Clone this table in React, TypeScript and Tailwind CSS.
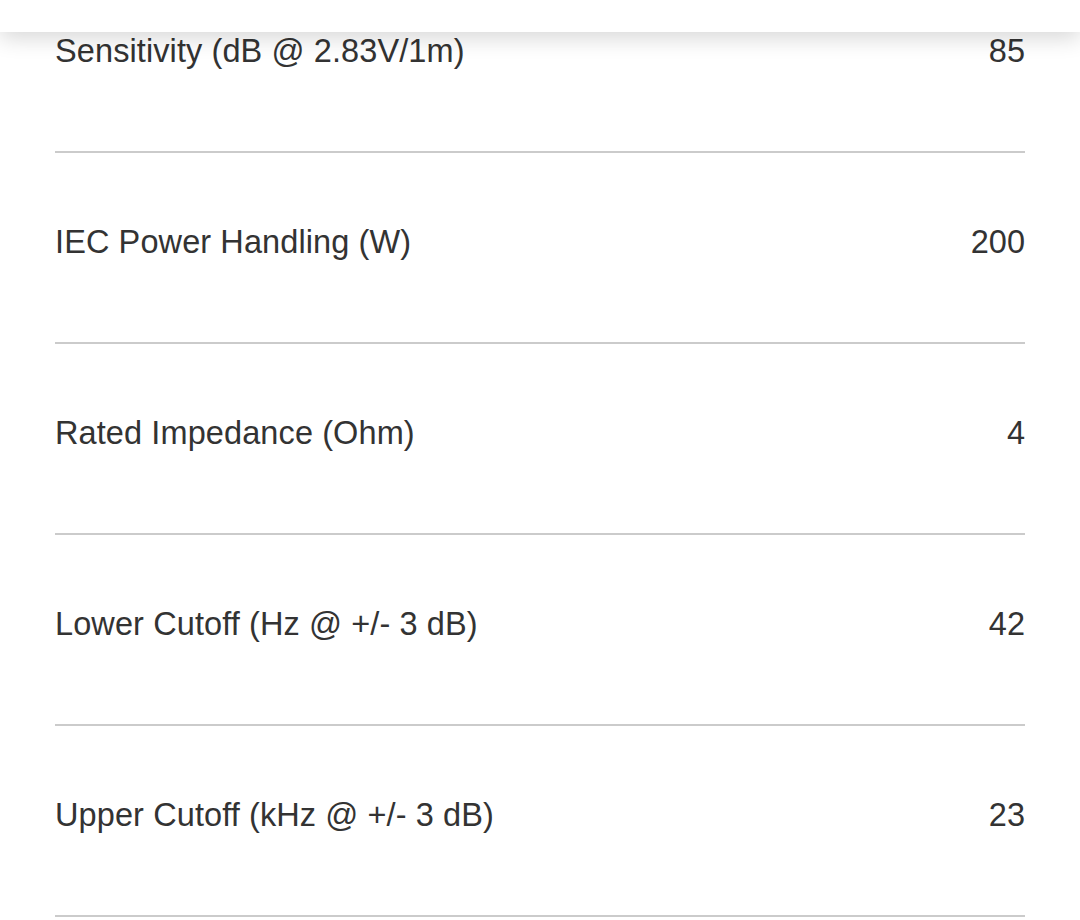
import React from 'react'

const specs = [
  { label: 'Sensitivity (dB @ 2.83V/1m)', value: '85' },
  { label: 'IEC Power Handling (W)', value: '200' },
  { label: 'Rated Impedance (Ohm)', value: '4' },
  { label: 'Lower Cutoff (Hz @ +/- 3 dB)', value: '42' },
  { label: 'Upper Cutoff (kHz @ +/- 3 dB)', value: '23' },
]

const App = () => {
  return (
    <div className="relative min-h-[920px] bg-white overflow-hidden font-['Liberation_Sans',Arial,sans-serif] text-[#333333]">
      {/* sticky header */}
      <div className="absolute top-0 left-0 right-0 h-[32px] bg-white shadow-[0_6px_22px_rgba(0,0,0,0.16)] z-10"></div>

      {/* spec table */}
      <div className="px-[55px]">
        {specs.map((s, i) => (
          <div
            key={i}
            className={`flex items-center justify-between border-b-2 border-[#cbcbcb] pb-[80px] ${i === 0 ? 'pt-[31px]' : 'pt-[69px]'}`}
          >
            <span className="text-[32.5px] leading-[40px] tracking-[0.1px]">{s.label}</span>
            <span className="text-[32.5px] leading-[40px]">{s.value}</span>
          </div>
        ))}
      </div>
    </div>
  )
}

export default App
